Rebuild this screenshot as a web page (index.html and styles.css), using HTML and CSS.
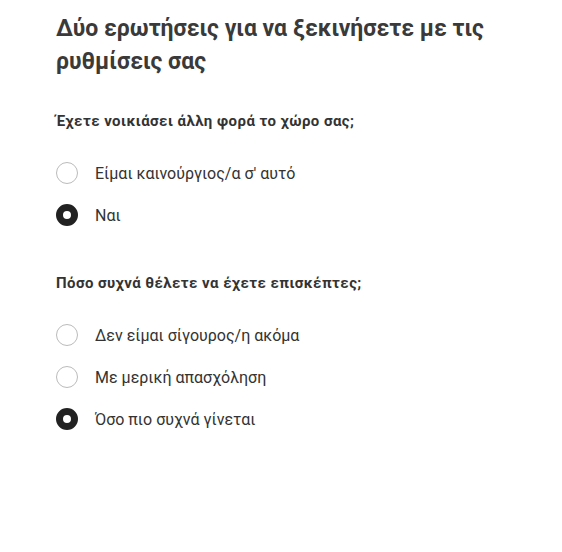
FILE: index.html
```html
<!DOCTYPE html>
<html lang="el">
  <head>
    <meta charset="UTF-8" />
    <meta name="viewport" content="width=device-width, initial-scale=1.0" />
    <title>Ρυθμίσεις</title>
    <link rel="stylesheet" href="styles.css">
  </head>
  <body>
    <div class="setup">
      <h1>Δύο ερωτήσεις για να ξεκινήσετε με τις ρυθμίσεις σας</h1>

      <fieldset class="question">
        <legend>Έχετε νοικιάσει άλλη φορά το χώρο σας;</legend>
        <label class="option">
          <input type="radio" name="hosted" value="new" />
          <span class="dot"></span>
          Είμαι καινούργιος/α σ' αυτό
        </label>
        <label class="option">
          <input type="radio" name="hosted" value="yes" checked />
          <span class="dot"></span>
          Ναι
        </label>
      </fieldset>

      <fieldset class="question">
        <legend>Πόσο συχνά θέλετε να έχετε επισκέπτες;</legend>
        <label class="option">
          <input type="radio" name="often" value="unsure" />
          <span class="dot"></span>
          Δεν είμαι σίγουρος/η ακόμα
        </label>
        <label class="option">
          <input type="radio" name="often" value="part" />
          <span class="dot"></span>
          Με μερική απασχόληση
        </label>
        <label class="option">
          <input type="radio" name="often" value="max" checked />
          <span class="dot"></span>
          Όσο πιο συχνά γίνεται
        </label>
      </fieldset>
    </div>
  </body>
</html>
```

FILE: styles.css
```css
body {
  font-family: Roboto, "Noto Sans", Arial, sans-serif;
  margin: 0;
  background-color: white;
  color: #333;
}
.setup {
  padding: 12px 56px;
}
h1 {
  font-size: 23px;
  line-height: 33px;
  font-weight: bold;
  color: #3a3a3a;
  margin: 0 0 34px;
  max-width: 450px;
}
.question {
  border: none;
  margin: 0 0 28px;
  padding: 0;
}
legend {
  font-size: 15px;
  font-weight: bold;
  letter-spacing: 0.45px;
  color: #333;
  padding: 0;
  margin-bottom: 32px;
}
.option {
  display: flex;
  align-items: center;
  gap: 17px;
  font-size: 16px;
  height: 22px;
  margin-bottom: 20px;
  cursor: pointer;
}
.option input {
  display: none;
}
.dot {
  width: 22px;
  height: 22px;
  border: 1px solid #bbb;
  border-radius: 50%;
  box-sizing: border-box;
  flex-shrink: 0;
}
.option input:checked + .dot {
  border: 7px solid #222;
  background-color: white;
}
```
